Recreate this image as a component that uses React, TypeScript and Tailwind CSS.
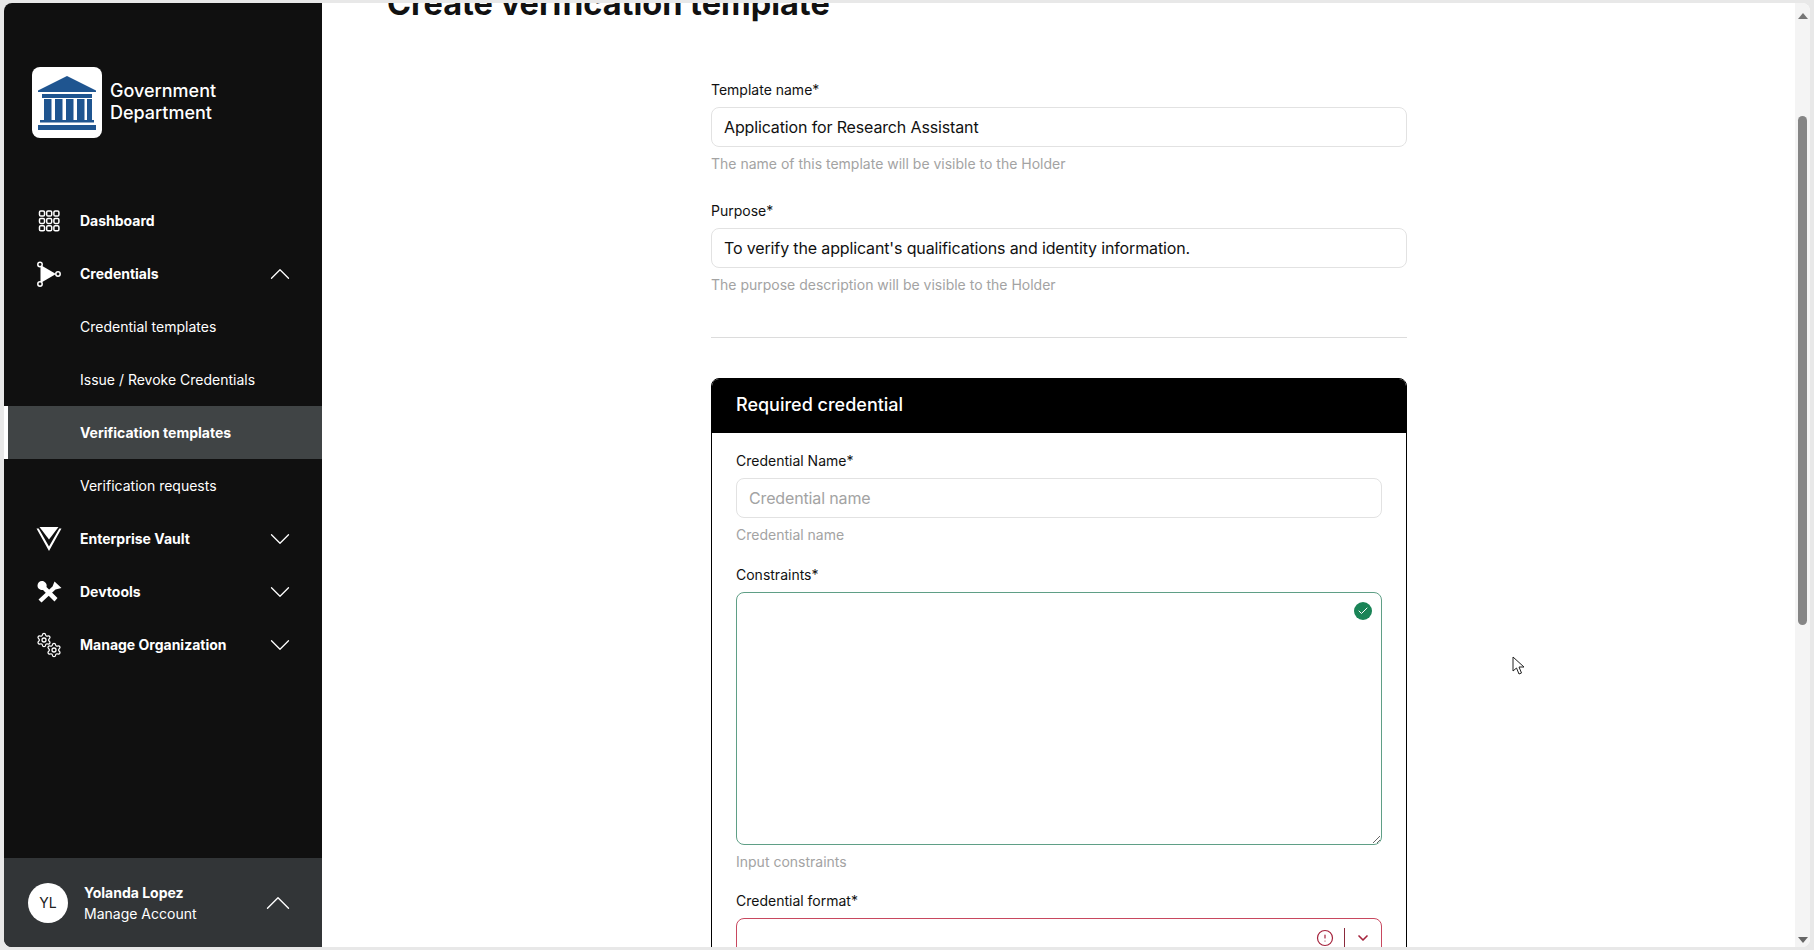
import { AlertCircle, Check, ChevronDown, ChevronUp, Settings } from 'lucide-react'

const font = "font-['Inter','Noto_Sans',sans-serif]"

function DashboardIcon() {
  const cells = [0, 1, 2].flatMap(y => [0, 1, 2].map(x => ({ x, y })))
  return (
    <svg width="24" height="24" viewBox="0 0 24 24" fill="none" stroke="white" strokeWidth="1.5">
      {cells.map(c => (
        <rect key={`${c.x}-${c.y}`} x={2.5 + c.x * 7.2} y={2 + c.y * 7.4} width="5" height="5" rx="1.3" />
      ))}
    </svg>
  )
}

function CredentialsIcon() {
  return (
    <svg width="26" height="26" viewBox="0 0 26 26" fill="white">
      <path d="M4.5 4 20 13 4.500 22Z" />
      <circle cx="4" cy="3.500" r="2.200" fill="#101010" stroke="white" strokeWidth="1.500" />
      <circle cx="4" cy="23" r="2.200" fill="#101010" stroke="white" strokeWidth="1.500" />
      <circle cx="22" cy="13" r="2.200" fill="#101010" stroke="white" strokeWidth="1.500" />
    </svg>
  )
}

function VaultIcon() {
  return (
    <svg width="26" height="26" viewBox="0 0 26 26" fill="white">
      <path d="M3.500 1h19L13 13.500z" />
      <path d="M0.500 2.500 13 25 25.500 2.500h-2.200L13 20.500 2.700 2.500z" />
    </svg>
  )
}

function DevtoolsIcon() {
  return (
    <svg width="26" height="26" viewBox="0 0 26 26" fill="white">
      <path d="M1.500 6.500C1.500 3 5 1 8 2.500c2.500 1.300 3 3.700 2.500 5.500L21.500 19 18.500 22.500 7 11C4 11.200 1.500 9.500 1.500 6.500z" />
      <path d="M25.500 9 18.500 2.500l-2 5L2.500 20.500l3 3L19.500 10.500z" />
    </svg>
  )
}

function GearsIcon() {
  return (
    <div className="relative h-[26px] w-[26px] text-white">
      <Settings size={16} strokeWidth={1.9} className="absolute top-0 left-0" />
      <Settings size={16} strokeWidth={1.9} className="absolute right-0 bottom-0" />
    </div>
  )
}

function LogoIcon() {
  return (
    <svg width="60" height="54" viewBox="0 0 60 54" fill="#1f5590">
      <path d="M30 0 59 14.500V16H1v-1.500z" />
      <rect x="5" y="18" width="50" height="4" />
      <rect x="7" y="23" width="7.500" height="21" />
      <rect x="18" y="23" width="7.500" height="21" />
      <rect x="29" y="23" width="7.500" height="21" />
      <rect x="40" y="23" width="7.500" height="21" />
      <rect x="50" y="23" width="5" height="21" />
      <rect x="3" y="44" width="54" height="2.500" />
      <rect x="1" y="49" width="58" height="5" />
    </svg>
  )
}

function NavRow({ icon, label, open, plain }: { icon: React.ReactNode; label: string; open?: boolean; plain?: boolean }) {
  return (
    <div className="flex h-[53px] items-center pr-[25px] pl-[32px]">
      <div className="flex w-[26px] justify-center">{icon}</div>
      <span className="ml-[18px] flex-1 text-[14px] font-bold text-white">{label}</span>
      {plain ? null : open ? (
        <ChevronUp size={34} strokeWidth={0.9} className="text-white" />
      ) : (
        <ChevronDown size={34} strokeWidth={0.9} className="text-white" />
      )}
    </div>
  )
}

function SubRow({ label, active }: { label: string; active?: boolean }) {
  return (
    <div
      className={
        active
          ? 'flex h-[53px] items-center border-l-[4px] border-white bg-[#404445] pl-[72px] text-[14px] font-bold text-white'
          : 'flex h-[53px] items-center pl-[76px] text-[14px] text-white'
      }
    >
      {label}
    </div>
  )
}

function Sidebar() {
  return (
    <aside className="flex h-full w-[318px] shrink-0 flex-col bg-[#101010]">
      <div className="mt-[64px] flex items-center pl-[28px]">
        <div className="flex h-[71px] w-[70px] items-center justify-center rounded-[8px] bg-white">
          <LogoIcon />
        </div>
        <div className="mb-[2px] ml-[8px] text-[18px] leading-[22px] font-medium text-white">
          Government
          <br />
          Department
        </div>
      </div>
      <nav className="mt-[56px]">
        <NavRow icon={<DashboardIcon />} label="Dashboard" plain />
        <NavRow icon={<CredentialsIcon />} label="Credentials" open />
        <SubRow label="Credential templates" />
        <SubRow label="Issue / Revoke Credentials" />
        <SubRow label="Verification templates" active />
        <SubRow label="Verification requests" />
        <NavRow icon={<VaultIcon />} label="Enterprise Vault" />
        <NavRow icon={<DevtoolsIcon />} label="Devtools" />
        <NavRow icon={<GearsIcon />} label="Manage Organization" />
      </nav>
      <div className="mt-auto flex h-[89px] items-center bg-[#323537] pr-[23px] pl-[24px]">
        <div className="flex h-[40px] w-[40px] items-center justify-center rounded-full bg-white text-[14px] text-[#222]">
          YL
        </div>
        <div className="ml-[16px] flex-1 text-[14px] leading-[21px] text-white">
          <div className="font-bold">Yolanda Lopez</div>
          <div>Manage Account</div>
        </div>
        <ChevronUp size={42} strokeWidth={0.8} className="text-white" />
      </div>
    </aside>
  )
}

function Field({ label, value, placeholder, hint }: { label: string; value?: string; placeholder?: string; hint: string }) {
  return (
    <div>
      <div className="text-[14px] leading-[20px] text-[#111]">{label}*</div>
      <input
        readOnly
        value={value ?? ''}
        placeholder={placeholder}
        className="mt-[7px] h-[40px] w-full rounded-[8px] border border-[#e2e2e2] bg-white px-[12px] text-[16px] tracking-[-0.14px] text-[#111] outline-none placeholder:text-[#a3a3a3]"
      />
      <div className="mt-[7px] text-[14px] leading-[20px] text-[#a3a3a3]">{hint}</div>
    </div>
  )
}

function Scrollbar() {
  return (
    <div className="flex h-full w-[15px] shrink-0 flex-col items-center bg-[#f4f4f4]">
      <div className="mt-[10px] h-0 w-0 border-x-[5px] border-b-[6px] border-x-transparent border-b-[#777]" />
      <div className="mt-[97px] h-[509px] w-[9px] rounded-full bg-[#858585]" />
      <div className="mt-auto mb-[4px] h-0 w-0 border-x-[5px] border-t-[6px] border-x-transparent border-t-[#666]" />
    </div>
  )
}

export default function App() {
  return (
    <div className={`${font} h-screen overflow-hidden bg-[#e8e8e8] px-[4px] py-[3px]`}>
      <div className="relative flex h-full overflow-hidden rounded-[8px] bg-white">
        <Sidebar />
        <main className="min-w-0 flex-1 overflow-hidden">
          <h1 className="mt-[-16px] ml-[65px] text-[32.5px] leading-[34px] font-bold text-[#111]">
            Create verification template
          </h1>
          <div className="mt-[59px] ml-[389px] w-[696px]">
            <div className="flex flex-col gap-[27px]">
              <Field
                label="Template name"
                value="Application for Research Assistant"
                hint="The name of this template will be visible to the Holder"
              />
              <Field
                label="Purpose"
                value="To verify the applicant's qualifications and identity information."
                hint="The purpose description will be visible to the Holder"
              />
            </div>
            <hr className="mt-[42px] border-[#dcdcdc]" />
            <section className="mt-[40px] rounded-[8px] border border-black">
              <div className="flex h-[54px] items-center rounded-t-[7px] bg-black px-[24px] pb-[4px] text-[18px] font-medium text-white">
                Required credential
              </div>
              <div className="px-[24px] pt-[18px]">
                <Field label="Credential Name" placeholder="Credential name" hint="Credential name" />
                <div className="mt-[20px] text-[14px] leading-[20px] text-[#111]">Constraints*</div>
                <div className="relative mt-[7px]">
                  <textarea
                    readOnly
                    className="block h-[253px] w-full resize-y rounded-[8px] border border-[#5f9f86] bg-white outline-none"
                  />
                  <div className="absolute top-[10px] right-[10px] flex h-[18px] w-[18px] items-center justify-center rounded-full bg-[#1a8457]">
                    <Check size={12} strokeWidth={2} className="text-white" />
                  </div>
                </div>
                <div className="mt-[7px] text-[14px] leading-[20px] text-[#a3a3a3]">Input constraints</div>
                <div className="mt-[19px] text-[14px] leading-[20px] text-[#111]">Credential format*</div>
                <div className="mt-[7px] flex h-[40px] items-center justify-end rounded-[8px] border border-[#c8485f] bg-white pr-[10px]">
                  <AlertCircle size={18} strokeWidth={1.6} className="text-[#a5243d]" />
                  <div className="mx-[10px] h-[20px] w-px bg-[#8a2a3c]" />
                  <ChevronDown size={16} strokeWidth={2.5} className="text-[#a5243d]" />
                </div>
              </div>
            </section>
          </div>
        </main>
        <Scrollbar />
        <svg className="absolute top-[653px] left-[1508px]" width="14" height="20" viewBox="0 0 14 20" fill="white" stroke="#222" strokeWidth="1">
          <path d="M1 1v14l3.500-3 2.500 6 2.500-1-2.500-6h5z" />
        </svg>
      </div>
    </div>
  )
}
